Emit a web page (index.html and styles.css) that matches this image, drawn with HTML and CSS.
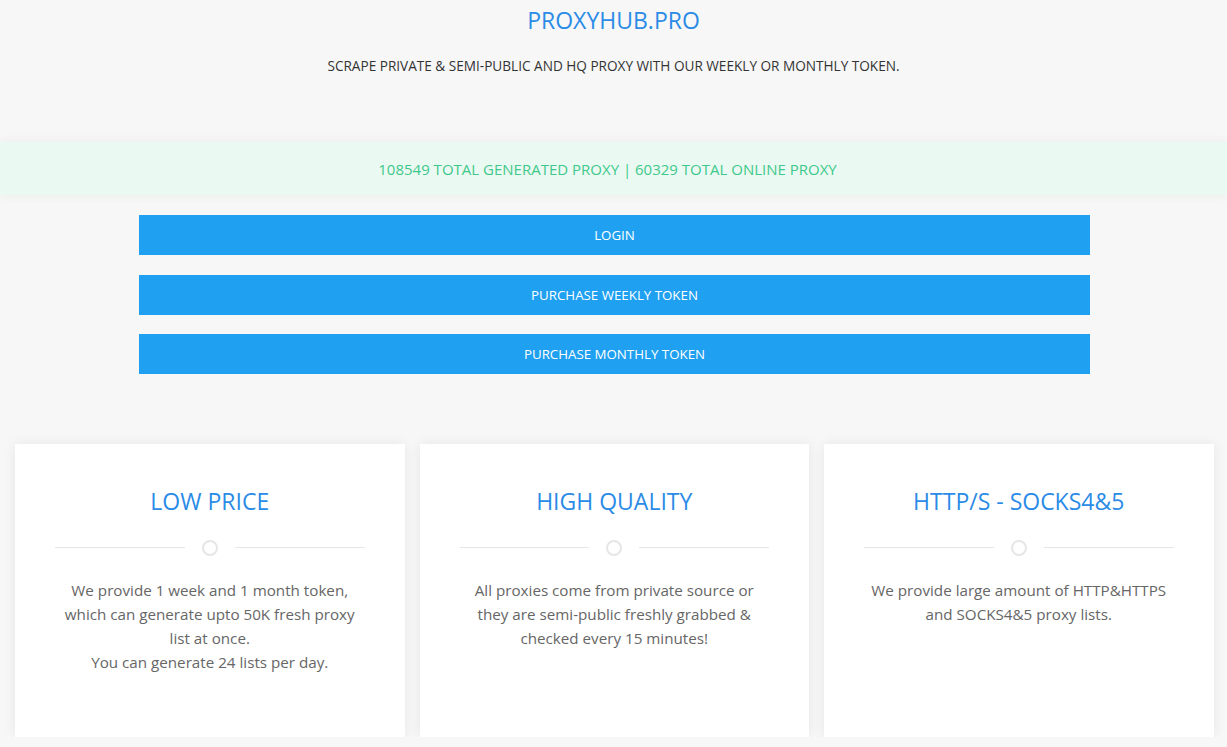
FILE: index.html
```html
<!DOCTYPE html>
<html lang="en">
<head>
<meta charset="utf-8">
<title>PROXYHUB.PRO</title>
<link rel="stylesheet" href="styles.css">
</head>
<body>
<header class="hero">
  <h1 class="brand">PROXYHUB.PRO</h1>
  <p class="tagline">SCRAPE PRIVATE &amp; SEMI-PUBLIC AND HQ PROXY WITH OUR WEEKLY OR MONTHLY TOKEN.</p>
</header>
<div class="stats">108549 TOTAL GENERATED PROXY | 60329 TOTAL ONLINE PROXY</div>
<nav class="actions">
  <a class="btn" href="#">LOGIN</a>
  <a class="btn" href="#">PURCHASE WEEKLY TOKEN</a>
  <a class="btn" href="#">PURCHASE MONTHLY TOKEN</a>
</nav>
<section class="features">
  <div class="card">
    <h2 class="card-title">LOW PRICE</h2>
    <div class="divider"><span class="line"></span><span class="dot"></span><span class="line"></span></div>
    <p class="card-text">We provide 1 week and 1 month token,<br>which can generate upto 50K fresh proxy<br>list at once.<br>You can generate 24 lists per day.</p>
  </div>
  <div class="card">
    <h2 class="card-title">HIGH QUALITY</h2>
    <div class="divider"><span class="line"></span><span class="dot"></span><span class="line"></span></div>
    <p class="card-text">All proxies come from private source or<br>they are semi-public freshly grabbed &amp;<br>checked every 15 minutes!</p>
  </div>
  <div class="card">
    <h2 class="card-title">HTTP/S - SOCKS4&amp;5</h2>
    <div class="divider"><span class="line"></span><span class="dot"></span><span class="line"></span></div>
    <p class="card-text">We provide large amount of HTTP&amp;HTTPS<br>and SOCKS4&amp;5 proxy lists.</p>
  </div>
</section>
</body>
</html>
```
FILE: styles.css
```css
* { box-sizing: border-box; }
html, body { margin: 0; padding: 0; }
body {
  background: #f7f7f7;
  font-family: "Open Sans", "Noto Sans", "Liberation Sans", sans-serif;
  color: #333;
  overflow: hidden;
}
.hero {
  text-align: center;
  padding-top: 4px;
  height: 142px;
}
.brand {
  margin: 0;
  font-size: 23px;
  font-weight: 400;
  color: #2b8be6;
  line-height: 32px;
}
.tagline {
  margin: 20px 0 0;
  font-size: 13.6px;
  line-height: 20px;
  color: #333;
}
.stats {
  height: 53px;
  background: #ebf9f3;
  box-shadow: 0 0 10px rgba(0,0,0,0.06);
  display: flex;
  align-items: center;
  justify-content: center;
  color: #3ec98a;
  font-size: 15px;
  padding-top: 1px;
  padding-right: 12px;
  position: relative;
}
.actions {
  width: 951px;
  margin: 20px 0 0 139px;
  display: flex;
  flex-direction: column;
  gap: 19.5px;
}
.btn {
  display: flex;
  align-items: center;
  justify-content: center;
  height: 40px;
  background: #1fa0f0;
  color: #fff;
  text-decoration: none;
  font-size: 13.3px;
}
.features {
  display: grid;
  grid-template-columns: repeat(3, 389.5px);
  gap: 15px;
  padding: 69.5px 0 0 15px;
}
.card {
  background: #fff;
  height: 293px;
  box-shadow: 0 0 12px rgba(0,0,0,0.07);
  text-align: center;
  padding: 40px 40px 0;
}
.card-title {
  margin: 0;
  font-size: 23px;
  font-weight: 400;
  color: #2b8be6;
  line-height: 34px;
}
.divider {
  display: flex;
  align-items: center;
  justify-content: center;
  gap: 17px;
  margin-top: 22px;
  height: 16px;
}
.line {
  flex: 1;
  height: 1px;
  background: #e6e6e6;
}
.dot {
  width: 16px;
  height: 16px;
  border: 2px solid #e6e6e6;
  border-radius: 50%;
}
.card-text {
  margin: 22px 0 0;
  font-size: 15.2px;
  line-height: 24px;
  color: #666;
}
```
